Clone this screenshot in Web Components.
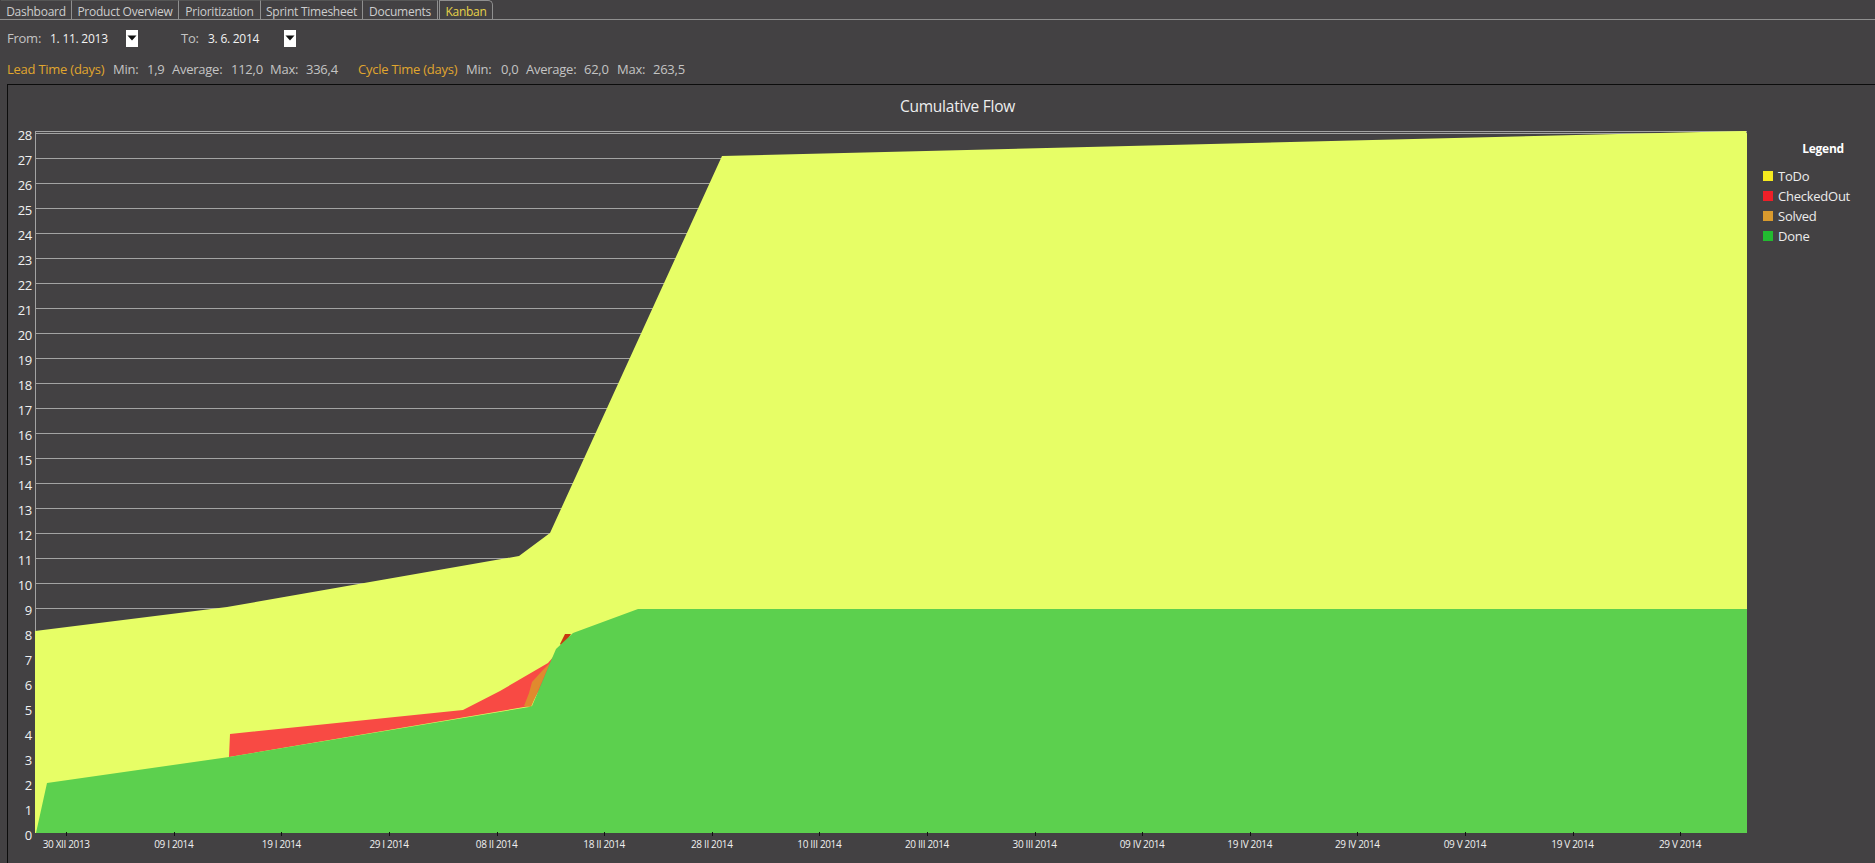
<!DOCTYPE html>
<html lang="en"><head><meta charset="utf-8"><title>Kanban</title>
<style>
html,body{margin:0;height:100%;background:#434143;overflow:hidden}
body{font:12px "Open Sans","Liberation Sans",sans-serif;color:#c9c9c9;display:flex;flex-direction:column;height:863px}
</style></head><body>
<app-tabs></app-tabs>
<date-filter></date-filter>
<stat-row></stat-row>
<flow-chart></flow-chart>
<script>
function def(name,html,build){customElements.define(name,class extends HTMLElement{connectedCallback(){if(this.shadowRoot)return;const r=this.attachShadow({mode:'open'});r.innerHTML=html;if(build)build(r,this)}})}
const ls='letter-spacing:-.25px;';

def('tab-item',`<style>:host{display:flex;align-items:center;justify-content:center;box-sizing:border-box;height:19px;border-right:1px solid #8f8f8f;border-top:1px solid #555;color:#cdcdcd;font-size:12px;${ls}white-space:nowrap;padding-top:2px}
:host([active]){color:#e6d24a;border:1px solid #8f8f8f;border-bottom:0;border-radius:0 5px 0 0}</style><slot></slot>`);

def('app-tabs',`<style>:host{display:flex;height:20px;box-sizing:border-box;padding-left:1px;border-bottom:1px solid #8f8f8f;flex:none}</style>
<tab-item style="width:71px">Dashboard</tab-item><tab-item style="width:107px">Product Overview</tab-item><tab-item style="width:82px">Prioritization</tab-item><tab-item style="width:102px">Sprint Timesheet</tab-item><tab-item style="width:75px">Documents</tab-item><tab-item active style="width:54px;margin-left:1px">Kanban</tab-item>`);

def('date-drop',`<style>:host{display:flex;width:12px;height:17px;background:#fff;align-items:center;justify-content:center}svg{display:block}</style><svg width="10" height="6" viewBox="0 0 10 6"><path d="M0.5 0.5H9.5L5 5.5Z" fill="#111"/></svg>`);

def('date-filter',`<style>:host{display:flex;align-items:center;height:36px;flex:none;font-size:13px;${ls}}
.l{color:#c4c4c4}.v{color:#f2f2f2;font-size:12px}</style>
<span class="l" style="margin-left:7px;width:43px">From:</span><span class="v" style="width:76px">1. 11. 2013</span><date-drop></date-drop>
<span class="l" style="margin-left:43px;width:27px">To:</span><span class="v" style="width:76px">3. 6. 2014</span><date-drop></date-drop>`);

def('stat-row',`<style>:host{display:flex;align-items:center;height:26px;padding-bottom:2px;flex:none;font-size:13px;${ls}color:#c4c4c4;white-space:nowrap}
.h{color:#e0a62e}span{display:block}</style>`,r=>{
 const cells=[['h','Lead Time (days)',7,106],['','Min:',113,34],['','1,9',147,25],['','Average:',172,59],['','112,0',231,39],['','Max:',270,36],['','336,4',306,52],
 ['h','Cycle Time (days)',358,108],['','Min:',466,35],['','0,0',501,25],['','Average:',526,58],['','62,0',584,33],['','Max:',617,36],['','263,5',653,40]];
 let x=0;for(const [c,t,at,w] of cells){const s=document.createElement('span');s.textContent=t;if(c)s.className=c;s.style.marginLeft=(at-x)+'px';s.style.width=w+'px';r.append(s);x=at+w}
});

def('chart-legend',`<style>:host{display:block;font-size:13px;color:#ececec;${ls}padding-top:18px}
.t{font-weight:700;font-size:12px;color:#fff;text-align:center;width:128px;height:19px;line-height:18px;padding-left:24px;box-sizing:border-box;margin-bottom:7px}
.i{display:flex;align-items:center;height:20.1px;padding-left:16px;gap:5px}
i{display:block;width:10px;height:10px}</style>
<div class="t">Legend</div>
<div class="i"><i style="background:#f6ea1f"></i>ToDo</div>
<div class="i"><i style="background:#ee1f28"></i>CheckedOut</div>
<div class="i"><i style="background:#d99a2e"></i>Solved</div>
<div class="i"><i style="background:#22bb30"></i>Done</div>`);

def('flow-chart',`<style>:host{display:grid;flex:1;grid-template-columns:27px 1712px 1fr;grid-template-rows:37px 711px 1fr;margin-left:7px;border-left:1px solid #0c0c0c;border-top:1px solid #0c0c0c;min-height:0}
.title{grid-column:1/-1;color:#eee;font-size:15.5px;line-height:18px;padding-top:12px;padding-left:892px;white-space:nowrap;${ls}}
.yax{display:flex;flex-direction:column;font-size:13px;color:#f0f0f0;${ls}}
.yax span{display:block;height:25px;line-height:25px;text-align:right;padding-right:3px;position:relative;top:1px}
.plot{margin-top:8px;height:703px;display:block}
.xax{grid-column:1/3;grid-row:3;display:flex;padding-left:4.4px}
.xax span{display:block;flex:none;width:107.6px;text-align:center;font-size:10px;letter-spacing:-.35px;color:#f0f0f0;white-space:nowrap;position:relative;padding-top:4px;line-height:14px}
.xax span::before{content:"";position:absolute;left:50%;top:-1px;width:1px;height:4px;background:#111}
</style>
<div class="title">Cumulative Flow</div>
<div class="yax"></div>
<svg class="plot" width="1712" height="703" viewBox="35 130 1712 703" xmlns="http://www.w3.org/2000/svg"></svg>
<chart-legend></chart-legend>
<div class="xax"></div>`,r=>{
 const y=r.querySelector('.yax');for(let v=28;v>=0;v--){const s=document.createElement('span');s.textContent=v;y.append(s)}
 const xa=r.querySelector('.xax');for(const t of ['30 XII 2013','09 I 2014','19 I 2014','29 I 2014','08 II 2014','18 II 2014','28 II 2014','10 III 2014','20 III 2014','30 III 2014','09 IV 2014','19 IV 2014','29 IV 2014','09 V 2014','19 V 2014','29 V 2014']){const s=document.createElement('span');s.textContent=t;xa.append(s)}
 let g='<path d="M35 131.5H1747" stroke="#a3a3a3" fill="none"/>';
 for(let v=0;v<=28;v++){const yy=Math.round(832.7-25*v)+.5;g+=`<path d="M35 ${yy}H1747" stroke="#a3a3a3" fill="none"/>`}
 g+='<path d="M35.5 131V833" stroke="#a3a3a3" fill="none"/>';
 g+='<polygon fill="#e7fe66" points="35,833 35,631 227,607 519,556 550,533 722,156 1743,131 1746,131 1747,134 1747,833"/>';
 g+='<polygon fill="#f84a44" points="229,757 230,734 463,710 500,691 548,663 568,640 530,706"/>';
 g+='<polygon fill="#c83a10" points="560,644 565,634 571,634 563,647"/>';
 g+='<polygon fill="#e08a2e" points="524,706 531,707 550,663 542,671 532,682 529,693"/>';
 g+='<polygon fill="#5cd04e" points="36,833 47,783 229,757 529,707 532,706 550,663 556,649 573,633 638,609 1747,609 1747,833"/>';
 r.querySelector('svg').innerHTML=g;
});
</script>
</body></html>
